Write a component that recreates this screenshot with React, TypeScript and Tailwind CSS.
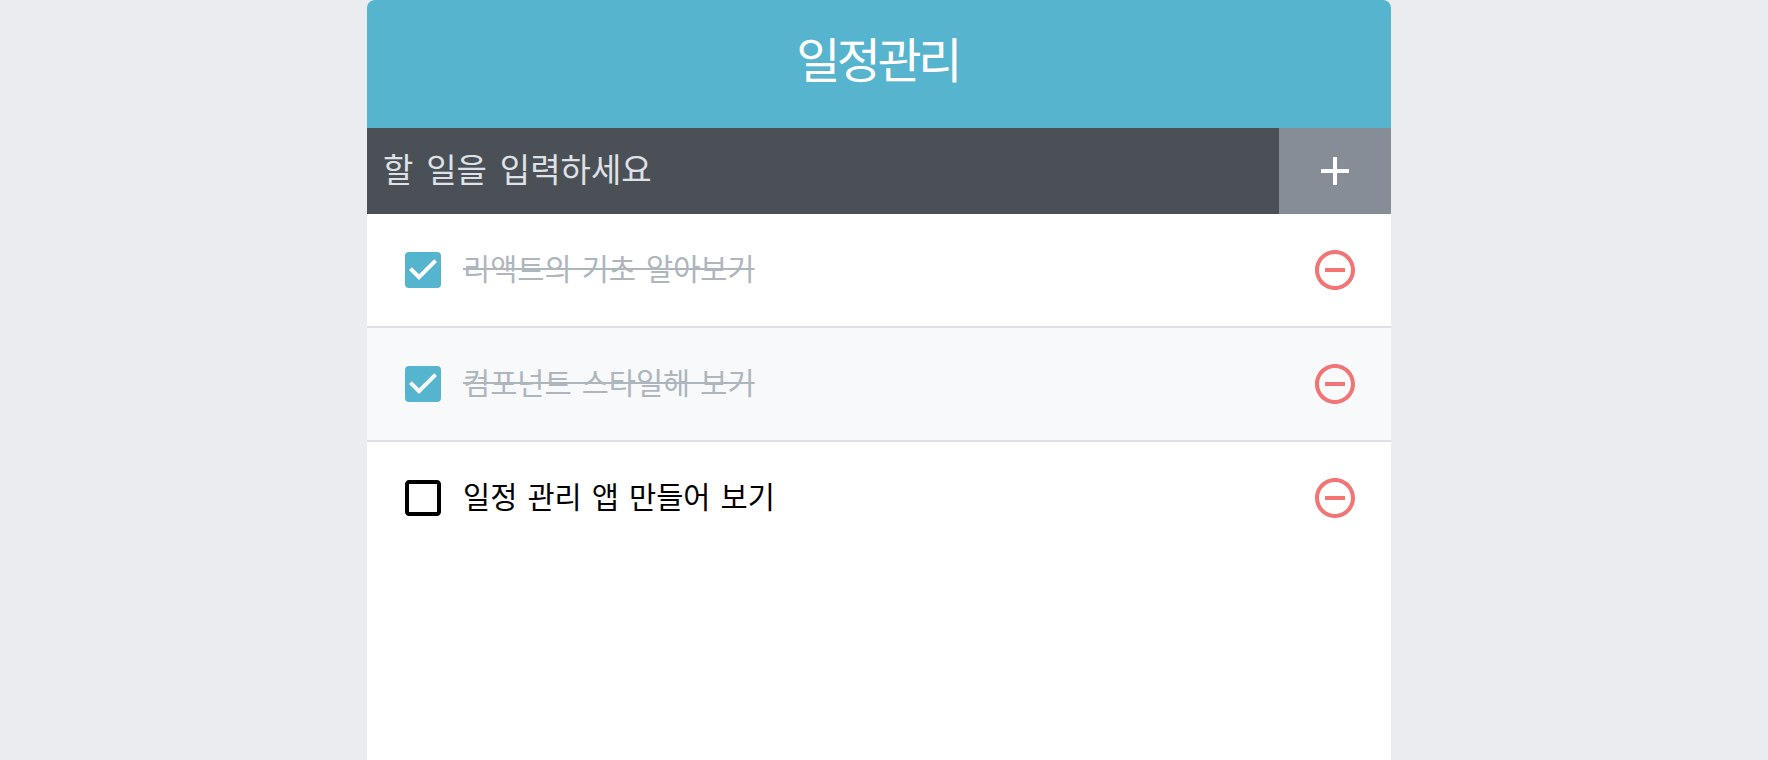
import { MdAdd, MdCheckBox, MdCheckBoxOutlineBlank, MdRemoveCircleOutline } from "react-icons/md";

const todos = [
    { id: 1, text: "리액트의 기초 알아보기", checked: true },
    { id: 2, text: "컴포넌트 스타일해 보기", checked: true },
    { id: 3, text: "일정 관리 앱 만들어 보기", checked: false },
];

function TodoItem({ text, checked, odd }: { text: string; checked: boolean; odd: boolean }) {
    return (
        <div className={`flex items-center p-8 h-[114px] border-b-2 border-[#dee2e6] last:border-b-transparent ${odd ? "bg-[#f8f9fa]" : "bg-white"}`}>
            <div className="flex flex-1 items-center">
                {checked ? (
                    <MdCheckBox className="w-12 h-12 text-[#55b4ce]" />
                ) : (
                    <MdCheckBoxOutlineBlank className="w-12 h-12 text-black" />
                )}
                <div className={`ml-4 mb-[6px] text-[29.5px] leading-[42px] [word-spacing:3.5px] ${checked ? "line-through decoration-2 text-[#adb5bd]" : "text-black"}`}>
                    {text}
                </div>
            </div>
            <MdRemoveCircleOutline className="w-12 h-12 text-[#f27474]" />
        </div>
    );
}

export default function App() {
    return (
        <div className="min-h-[760px] bg-[#ebecf0] overflow-hidden font-['Noto_Sans_CJK_KR','Liberation_Sans',sans-serif]">
            <div className="w-[1024px] ml-[367px] h-[760px] bg-white rounded-t-lg overflow-hidden">
                <div className="h-[128px] pb-[14px] pr-[3px] flex items-center justify-center bg-[#56b4ce] text-white text-[48px] tracking-[-3.5px]">
                    일정관리
                </div>
                <div className="flex h-[86px] bg-[#4b4f56]">
                    <div className="flex-1 flex items-center px-4 pb-[5px] text-[33px] [word-spacing:5.5px] text-[#dee2e6]">
                        할 일을 입력하세요
                    </div>
                    <div className="w-[112px] flex items-center justify-center bg-[#878d96] text-white">
                        <MdAdd className="w-12 h-12" />
                    </div>
                </div>
                <div className="bg-white">
                    {todos.map((t, i) => (
                        <TodoItem key={t.id} text={t.text} checked={t.checked} odd={i % 2 === 1} />
                    ))}
                </div>
            </div>
        </div>
    );
}
